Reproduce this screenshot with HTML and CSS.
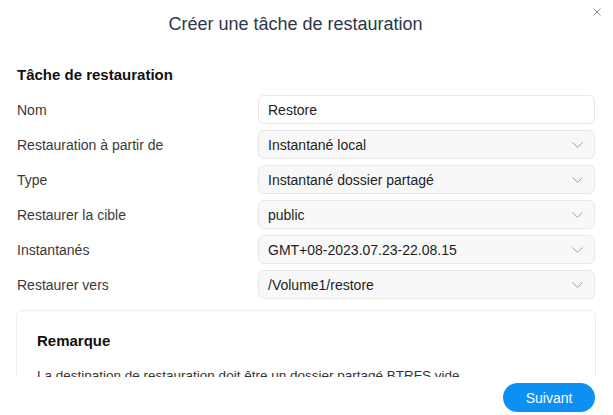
FILE: index.html
```html
<!DOCTYPE html>
<html lang="fr">
<head>
<meta charset="utf-8">
<link rel="stylesheet" href="styles.css">
</head>
<body>
<div class="dialog">
  <div class="header">
    <h1 class="title">Créer une tâche de restauration</h1>
    <button class="close" aria-label="Fermer">
      <svg width="8" height="8" viewBox="0 0 8 8"><path d="M0.5 0.5L7.5 7.5M7.5 0.5L0.5 7.5" stroke="#8a8a8a" stroke-width="1" fill="none"/></svg>
    </button>
  </div>
  <div class="content">
    <h2 class="section-title">Tâche de restauration</h2>
    <div class="form">
      <div class="row"><span class="label">Nom</span><div class="field text">Restore</div></div>
      <div class="row"><span class="label">Restauration à partir de</span><div class="field select">Instantané local<svg class="chev" width="11" height="6" viewBox="0 0 11 6"><path d="M0.5 0.5L5.5 5.3L10.5 0.5" stroke="#a0a0a0" stroke-width="1" fill="none"/></svg></div></div>
      <div class="row"><span class="label">Type</span><div class="field select">Instantané dossier partagé<svg class="chev" width="11" height="6" viewBox="0 0 11 6"><path d="M0.5 0.5L5.5 5.3L10.5 0.5" stroke="#a0a0a0" stroke-width="1" fill="none"/></svg></div></div>
      <div class="row"><span class="label">Restaurer la cible</span><div class="field select">public<svg class="chev" width="11" height="6" viewBox="0 0 11 6"><path d="M0.5 0.5L5.5 5.3L10.5 0.5" stroke="#a0a0a0" stroke-width="1" fill="none"/></svg></div></div>
      <div class="row"><span class="label">Instantanés</span><div class="field select">GMT+08-2023.07.23-22.08.15<svg class="chev" width="11" height="6" viewBox="0 0 11 6"><path d="M0.5 0.5L5.5 5.3L10.5 0.5" stroke="#a0a0a0" stroke-width="1" fill="none"/></svg></div></div>
      <div class="row"><span class="label">Restaurer vers</span><div class="field select">/Volume1/restore<svg class="chev" width="11" height="6" viewBox="0 0 11 6"><path d="M0.5 0.5L5.5 5.3L10.5 0.5" stroke="#a0a0a0" stroke-width="1" fill="none"/></svg></div></div>
    </div>
    <div class="note">
      <h3 class="note-title">Remarque</h3>
      <p class="note-text">La destination de restauration doit être un dossier partagé BTRFS vide.</p>
    </div>
  </div>
  <div class="footer">
    <button class="primary">Suivant</button>
  </div>
</div>
</body>
</html>
```
FILE: styles.css
```css
* { box-sizing: border-box; }
html, body { margin: 0; padding: 0; background: #fff; }
body { font-family: "Liberation Sans", Arial, sans-serif; color: #333; }

.dialog {
  width: 613px;
  height: 415px;
  display: flex;
  flex-direction: column;
  position: relative;
  overflow: hidden;
}

.header {
  height: 48px;
  flex: none;
  display: flex;
  align-items: center;
  justify-content: center;
  padding-right: 22px;
}
.title {
  margin: 0;
  font-size: 18px;
  font-weight: normal;
  color: #2c3748;
  line-height: 20px;
}
.close {
  position: absolute;
  top: 8px;
  right: 12px;
  width: 8px;
  height: 8px;
  padding: 0;
  border: 0;
  background: none;
  display: flex;
}

.content {
  height: 329px;
  flex: none;
  overflow: hidden;
  padding: 0 17px 0 16px;
}
.section-title {
  margin: 17px 0 10px 1px;
  font-size: 15px;
  line-height: 20px;
  font-weight: bold;
  color: #111;
}

.form {
  display: flex;
  flex-direction: column;
  gap: 6px;
}
.row {
  display: grid;
  grid-template-columns: 242px 337px;
  align-items: center;
  height: 29px;
}
.label {
  font-size: 14px;
  color: #3a3a3a;
  padding-left: 1px;
}
.field {
  height: 29px;
  border: 1px solid #e8e8e8;
  border-radius: 6px;
  display: flex;
  align-items: center;
  justify-content: space-between;
  padding: 0 9px 0 9px;
  font-size: 14px;
  color: #1e1e1e;
}
.field.text { background: #fff; }
.field.select { background: #f8f8f8; }
.chev { flex: none; margin-right: 2px; margin-top: 1px; }

.note {
  margin-top: 11px;
  border: 1px solid #ececec;
  border-radius: 6px;
  padding: 20px 20px 20px 20px;
  width: 580px;
}
.note-title {
  margin: 0;
  font-size: 15px;
  line-height: 20px;
  font-weight: bold;
  color: #111;
}
.note-text {
  margin: 17px 0 0 0;
  font-size: 13.5px;
  line-height: 16px;
  color: #333;
}

.footer {
  flex: 1;
  display: flex;
  justify-content: flex-end;
  align-items: flex-start;
  padding: 6px 18px 0 0;
}
.primary {
  width: 92px;
  height: 29px;
  border: 0;
  border-radius: 15px;
  background: #0c91f2;
  color: #fff;
  font-family: "Liberation Sans", Arial, sans-serif;
  font-size: 14px;
  padding: 0;
}
```
